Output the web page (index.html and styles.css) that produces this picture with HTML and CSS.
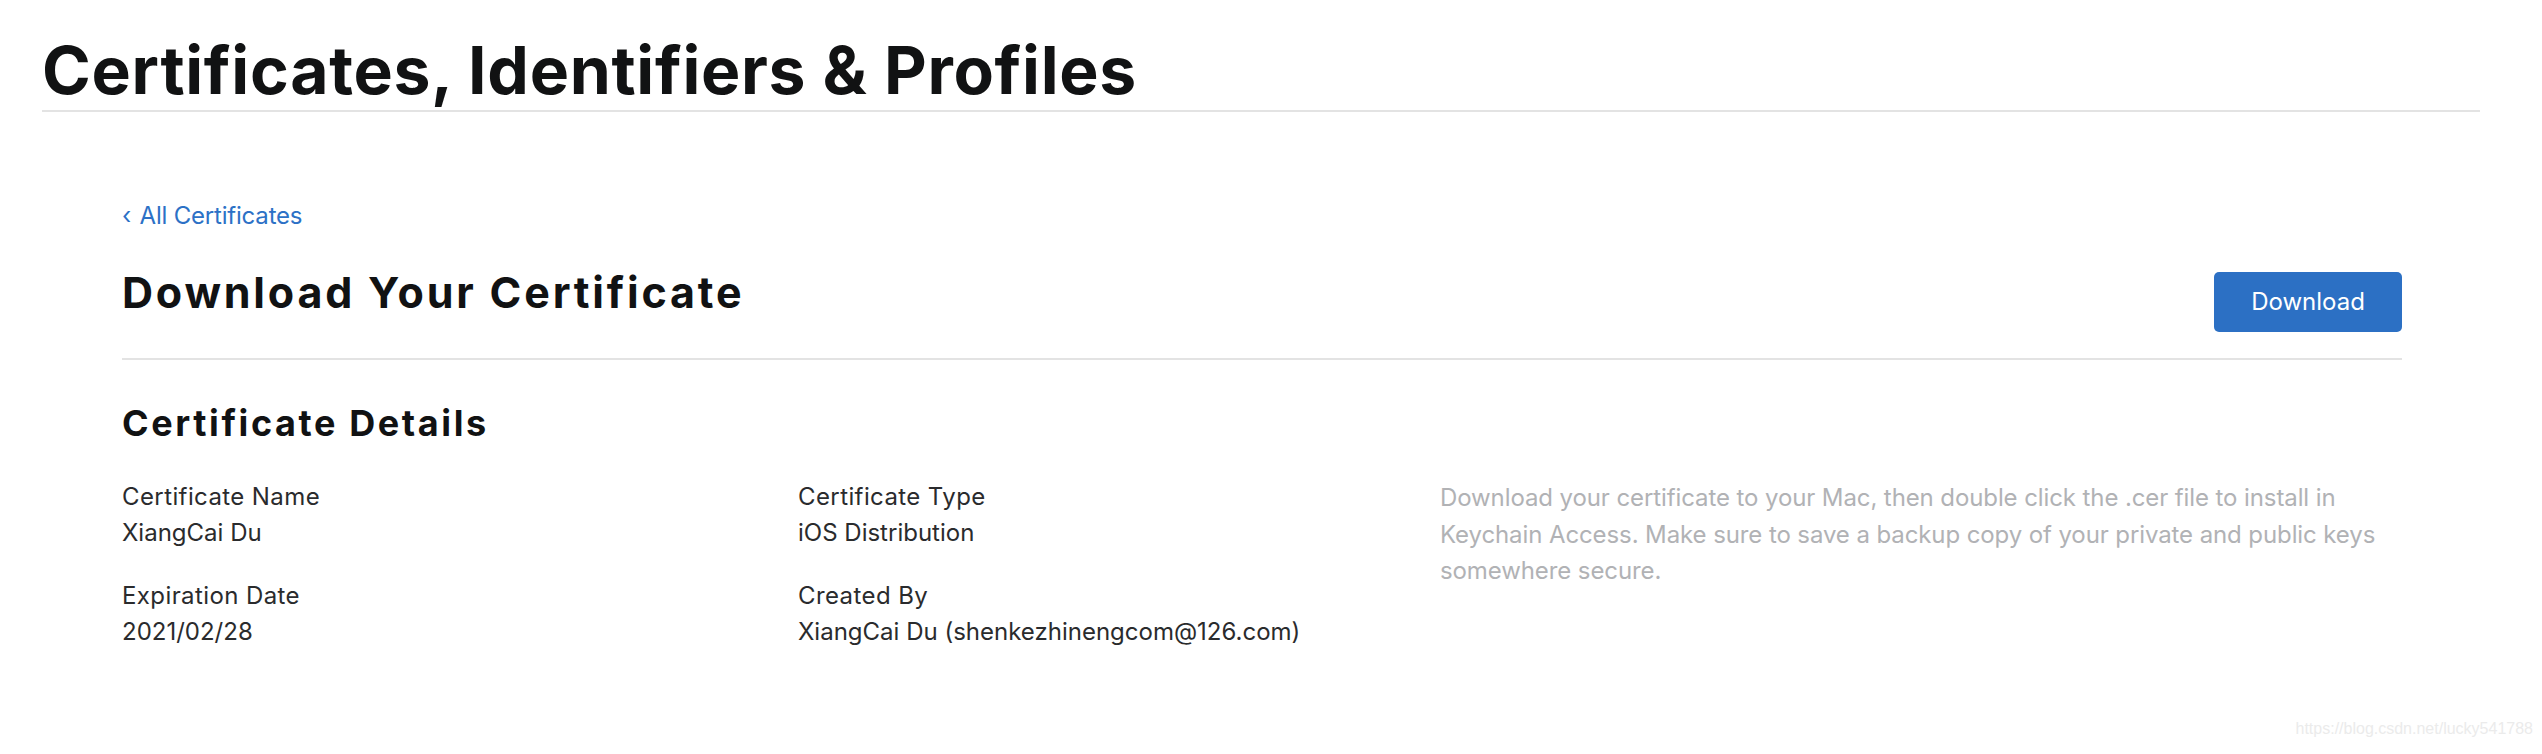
FILE: index.html
```html
<!DOCTYPE html>
<html lang="en">
<head>
<meta charset="utf-8">
<title>Certificates, Identifiers &amp; Profiles</title>
<link rel="stylesheet" href="styles.css">
</head>
<body>
<header class="page-header">
  <h1 class="page-title">Certificates, Identifiers &amp; Profiles</h1>
</header>
<main class="content">
  <a class="back-link" href="#"><span class="chev">‹</span> All Certificates</a>
  <div class="title-row">
    <h2 class="section-title">Download Your Certificate</h2>
    <button class="btn-primary" type="button">Download</button>
  </div>
  <section class="details">
    <h3 class="details-title">Certificate Details</h3>
    <div class="details-grid">
      <div class="col">
        <div class="field">
          <div class="label">Certificate Name</div>
          <div class="value">XiangCai Du</div>
        </div>
        <div class="field">
          <div class="label">Expiration Date</div>
          <div class="value">2021/02/28</div>
        </div>
      </div>
      <div class="col">
        <div class="field">
          <div class="label">Certificate Type</div>
          <div class="value">iOS Distribution</div>
        </div>
        <div class="field">
          <div class="label">Created By</div>
          <div class="value">XiangCai Du (shenkezhinengcom@126.com)</div>
        </div>
      </div>
      <p class="note">Download your certificate to your Mac, then double click the .cer file to install in Keychain Access. Make sure to save a backup copy of your private and public keys somewhere secure.</p>
    </div>
  </section>
</main>
<div class="watermark">https://blog.csdn.net/lucky541788</div>
</body>
</html>
```

FILE: styles.css
```css
html, body {
  margin: 0;
  padding: 0;
  background: #ffffff;
}
body {
  font-family: Inter, "Noto Sans", "Liberation Sans", sans-serif;
  color: #1d1d1f;
  width: 2542px;
  height: 754px;
  position: relative;
  overflow: hidden;
}
.page-header {
  margin: 0 62px 0 42px;
  padding-top: 35px;
  border-bottom: 2px solid #e3e3e3;
  padding-bottom: 5px;
}
.page-title {
  margin: 0;
  font-size: 66px;
  line-height: 70px;
  font-weight: 700;
  letter-spacing: 0.7px;
  color: #111213;
}
.content {
  margin: 0 140px 0 122px;
  padding-top: 89px;
}
.back-link {
  display: block;
  font-size: 24px;
  line-height: 30px;
  color: #2c71c6;
  text-decoration: none;
  letter-spacing: -0.2px;
}
.back-link .chev {
  display: inline-block;
  margin-right: 2px;
}
.title-row {
  display: flex;
  justify-content: space-between;
  align-items: flex-start;
  margin-top: 37px;
  padding-bottom: 26px;
  border-bottom: 2px solid #e3e3e3;
}
.section-title {
  margin: 0;
  font-size: 43px;
  line-height: 48px;
  font-weight: 700;
  letter-spacing: 2.8px;
  color: #111213;
}
.btn-primary {
  margin-top: 4px;
  width: 188px;
  height: 60px;
  border: none;
  border-radius: 5px;
  background: #2c70c4;
  color: #ffffff;
  font-family: Inter, "Noto Sans", sans-serif;
  font-size: 24px;
  line-height: 60px;
  padding: 0;
}
.details {
  padding-top: 43px;
}
.details-title {
  margin: 0;
  font-size: 36px;
  line-height: 40px;
  font-weight: 700;
  letter-spacing: 2.6px;
  color: #111213;
}
.details-grid {
  display: grid;
  grid-template-columns: 676px 642px 1fr;
  margin-top: 36px;
}
.col {
  display: flex;
  flex-direction: column;
  gap: 27px;
}
.label, .value {
  font-size: 24px;
  line-height: 36px;
  color: #2a2b2d;
}
.label {
  letter-spacing: 0.4px;
}
.value {
  letter-spacing: 0;
}
.note {
  margin: 0;
  padding-top: 1px;
  font-size: 24px;
  line-height: 36.5px;
  color: #b1b2b5;
  letter-spacing: -0.1px;
}
.watermark {
  position: absolute;
  right: 9px;
  bottom: 16px;
  font-family: "Liberation Sans", Arial, sans-serif;
  font-size: 16px;
  color: #ebebeb;
}
```
